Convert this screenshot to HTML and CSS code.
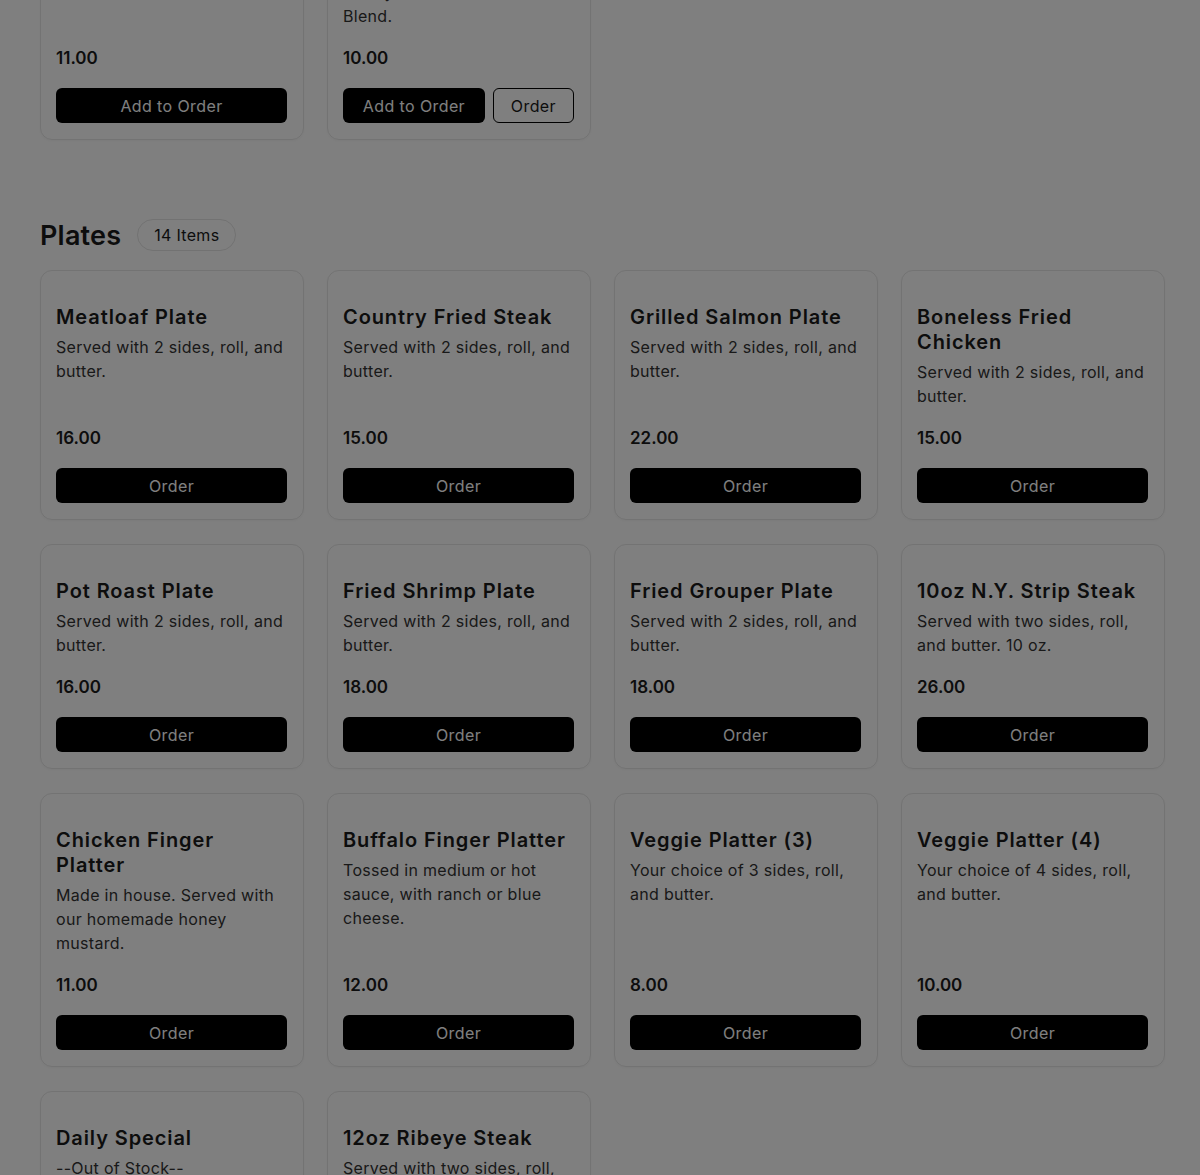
FILE: index.html
```html
<!DOCTYPE html>
<html lang="en">
<head>
    <meta charset="UTF-8">
    <meta name="viewport" content="width=device-width, initial-scale=1.0">
    <title>Menu</title>
    <link rel="stylesheet" href="styles.css">
</head>
<body>
    <main class="menu">
        <section class="category">
            <div class="category-header">
                <h2>Drinks</h2>
                <span class="count-pill">2 Items</span>
            </div>
            <div class="item-grid">
                <div class="item-card">
                    <h3>Sweet Tea</h3>
                    <p class="item-desc">Gallon of fresh brewed tea.</p>
                    <p class="item-price">11.00</p>
                    <div class="item-actions">
                        <button class="btn btn-dark">Add to Order</button>
                    </div>
                </div>
                <div class="item-card">
                    <h3>House Coffee</h3>
                    <p class="item-desc">Fresh brewed daily from our locally roasted Breakfast Blend.</p>
                    <p class="item-price">10.00</p>
                    <div class="item-actions">
                        <button class="btn btn-dark">Add to Order</button>
                        <button class="btn btn-outline">Order</button>
                    </div>
                </div>
            </div>
        </section>

        <section class="category">
            <div class="category-header">
                <h2>Plates</h2>
                <span class="count-pill">14 Items</span>
            </div>
            <div class="item-grid">
                <div class="item-card">
                    <h3>Meatloaf Plate</h3>
                    <p class="item-desc">Served with 2 sides, roll, and butter.</p>
                    <p class="item-price">16.00</p>
                    <div class="item-actions"><button class="btn btn-dark">Order</button></div>
                </div>
                <div class="item-card">
                    <h3>Country Fried Steak</h3>
                    <p class="item-desc">Served with 2 sides, roll, and butter.</p>
                    <p class="item-price">15.00</p>
                    <div class="item-actions"><button class="btn btn-dark">Order</button></div>
                </div>
                <div class="item-card">
                    <h3>Grilled Salmon Plate</h3>
                    <p class="item-desc">Served with 2 sides, roll, and butter.</p>
                    <p class="item-price">22.00</p>
                    <div class="item-actions"><button class="btn btn-dark">Order</button></div>
                </div>
                <div class="item-card">
                    <h3>Boneless Fried Chicken</h3>
                    <p class="item-desc">Served with 2 sides, roll, and butter.</p>
                    <p class="item-price">15.00</p>
                    <div class="item-actions"><button class="btn btn-dark">Order</button></div>
                </div>

                <div class="item-card">
                    <h3>Pot Roast Plate</h3>
                    <p class="item-desc">Served with 2 sides, roll, and butter.</p>
                    <p class="item-price">16.00</p>
                    <div class="item-actions"><button class="btn btn-dark">Order</button></div>
                </div>
                <div class="item-card">
                    <h3>Fried Shrimp Plate</h3>
                    <p class="item-desc">Served with 2 sides, roll, and butter.</p>
                    <p class="item-price">18.00</p>
                    <div class="item-actions"><button class="btn btn-dark">Order</button></div>
                </div>
                <div class="item-card">
                    <h3>Fried Grouper Plate</h3>
                    <p class="item-desc">Served with 2 sides, roll, and butter.</p>
                    <p class="item-price">18.00</p>
                    <div class="item-actions"><button class="btn btn-dark">Order</button></div>
                </div>
                <div class="item-card">
                    <h3>10oz N.Y. Strip Steak</h3>
                    <p class="item-desc">Served with two sides, roll, and butter. 10 oz.</p>
                    <p class="item-price">26.00</p>
                    <div class="item-actions"><button class="btn btn-dark">Order</button></div>
                </div>

                <div class="item-card">
                    <h3>Chicken Finger Platter</h3>
                    <p class="item-desc">Made in house. Served with our homemade honey mustard.</p>
                    <p class="item-price">11.00</p>
                    <div class="item-actions"><button class="btn btn-dark">Order</button></div>
                </div>
                <div class="item-card">
                    <h3>Buffalo Finger Platter</h3>
                    <p class="item-desc">Tossed in medium or hot sauce, with ranch or blue cheese.</p>
                    <p class="item-price">12.00</p>
                    <div class="item-actions"><button class="btn btn-dark">Order</button></div>
                </div>
                <div class="item-card">
                    <h3>Veggie Platter (3)</h3>
                    <p class="item-desc">Your choice of 3 sides, roll, and butter.</p>
                    <p class="item-price">8.00</p>
                    <div class="item-actions"><button class="btn btn-dark">Order</button></div>
                </div>
                <div class="item-card">
                    <h3>Veggie Platter (4)</h3>
                    <p class="item-desc">Your choice of 4 sides, roll, and butter.</p>
                    <p class="item-price">10.00</p>
                    <div class="item-actions"><button class="btn btn-dark">Order</button></div>
                </div>

                <div class="item-card">
                    <h3>Daily Special</h3>
                    <p class="item-desc">--Out of Stock--</p>
                    <p class="item-price">12.00</p>
                    <div class="item-actions"><button class="btn btn-dark">Order</button></div>
                </div>
                <div class="item-card">
                    <h3>12oz Ribeye Steak</h3>
                    <p class="item-desc">Served with two sides, roll, and butter. 12 oz.</p>
                    <p class="item-price">30.00</p>
                    <div class="item-actions"><button class="btn btn-dark">Order</button></div>
                </div>
            </div>
        </section>
    </main>

    <div class="overlay"></div>
</body>
</html>
```
FILE: styles.css
```css
body {
    font-family: 'Inter', 'Open Sans', sans-serif;
    margin: 0;
    padding: 0;
    background-color: #fff;
    color: #1a1a1a;
    letter-spacing: 0.3px;
}
.menu {
    margin-top: -160px;
    padding: 0 35px 0 40px;
}
.category {
    margin-bottom: 79px;
}
.category-header {
    display: flex;
    align-items: center;
    gap: 16px;
    height: 32px;
    margin-bottom: 19px;
}
.category-header h2 {
    margin: 0;
    font-size: 27px;
    font-weight: 600;
    letter-spacing: 0.2px;
}
.count-pill {
    border: 1px solid #e4e4e4;
    border-radius: 16px;
    padding: 0 16px;
    line-height: 30px;
    font-size: 16px;
}
.item-grid {
    display: grid;
    grid-template-columns: repeat(4, 1fr);
    column-gap: 23px;
    row-gap: 24px;
}
.item-card {
    display: flex;
    flex-direction: column;
    border: 1px solid #e6e6e6;
    border-radius: 12px;
    padding: 34px 16px 16px 15px;
    box-shadow: 0 1px 3px rgba(0,0,0,0.04);
}
.item-card h3 {
    margin: 0;
    font-size: 20px;
    line-height: 25px;
    font-weight: 600;
    letter-spacing: 0.9px;
}
.item-desc {
    margin: 5px 0 20px;
    font-size: 16px;
    line-height: 24px;
    color: #333;
}
.item-price {
    margin: auto 0 0;
    font-size: 17px;
    line-height: 20px;
    font-weight: 600;
    letter-spacing: 0;
}
.item-actions {
    display: flex;
    gap: 8px;
    margin-top: 20px;
}
.btn {
    height: 35px;
    border-radius: 6px;
    font-family: inherit;
    font-size: 16px;
    letter-spacing: 0.4px;
    cursor: pointer;
}
.btn-dark {
    flex: 1;
    background-color: #000;
    color: #fff;
    border: none;
}
.btn-outline {
    background-color: #fff;
    color: #1a1a1a;
    border: 1px solid #000;
    padding: 0 17px;
}
.overlay {
    position: fixed;
    top: 0;
    left: 0;
    width: 100%;
    height: 100%;
    background-color: rgba(0,0,0,0.5);
}
```
